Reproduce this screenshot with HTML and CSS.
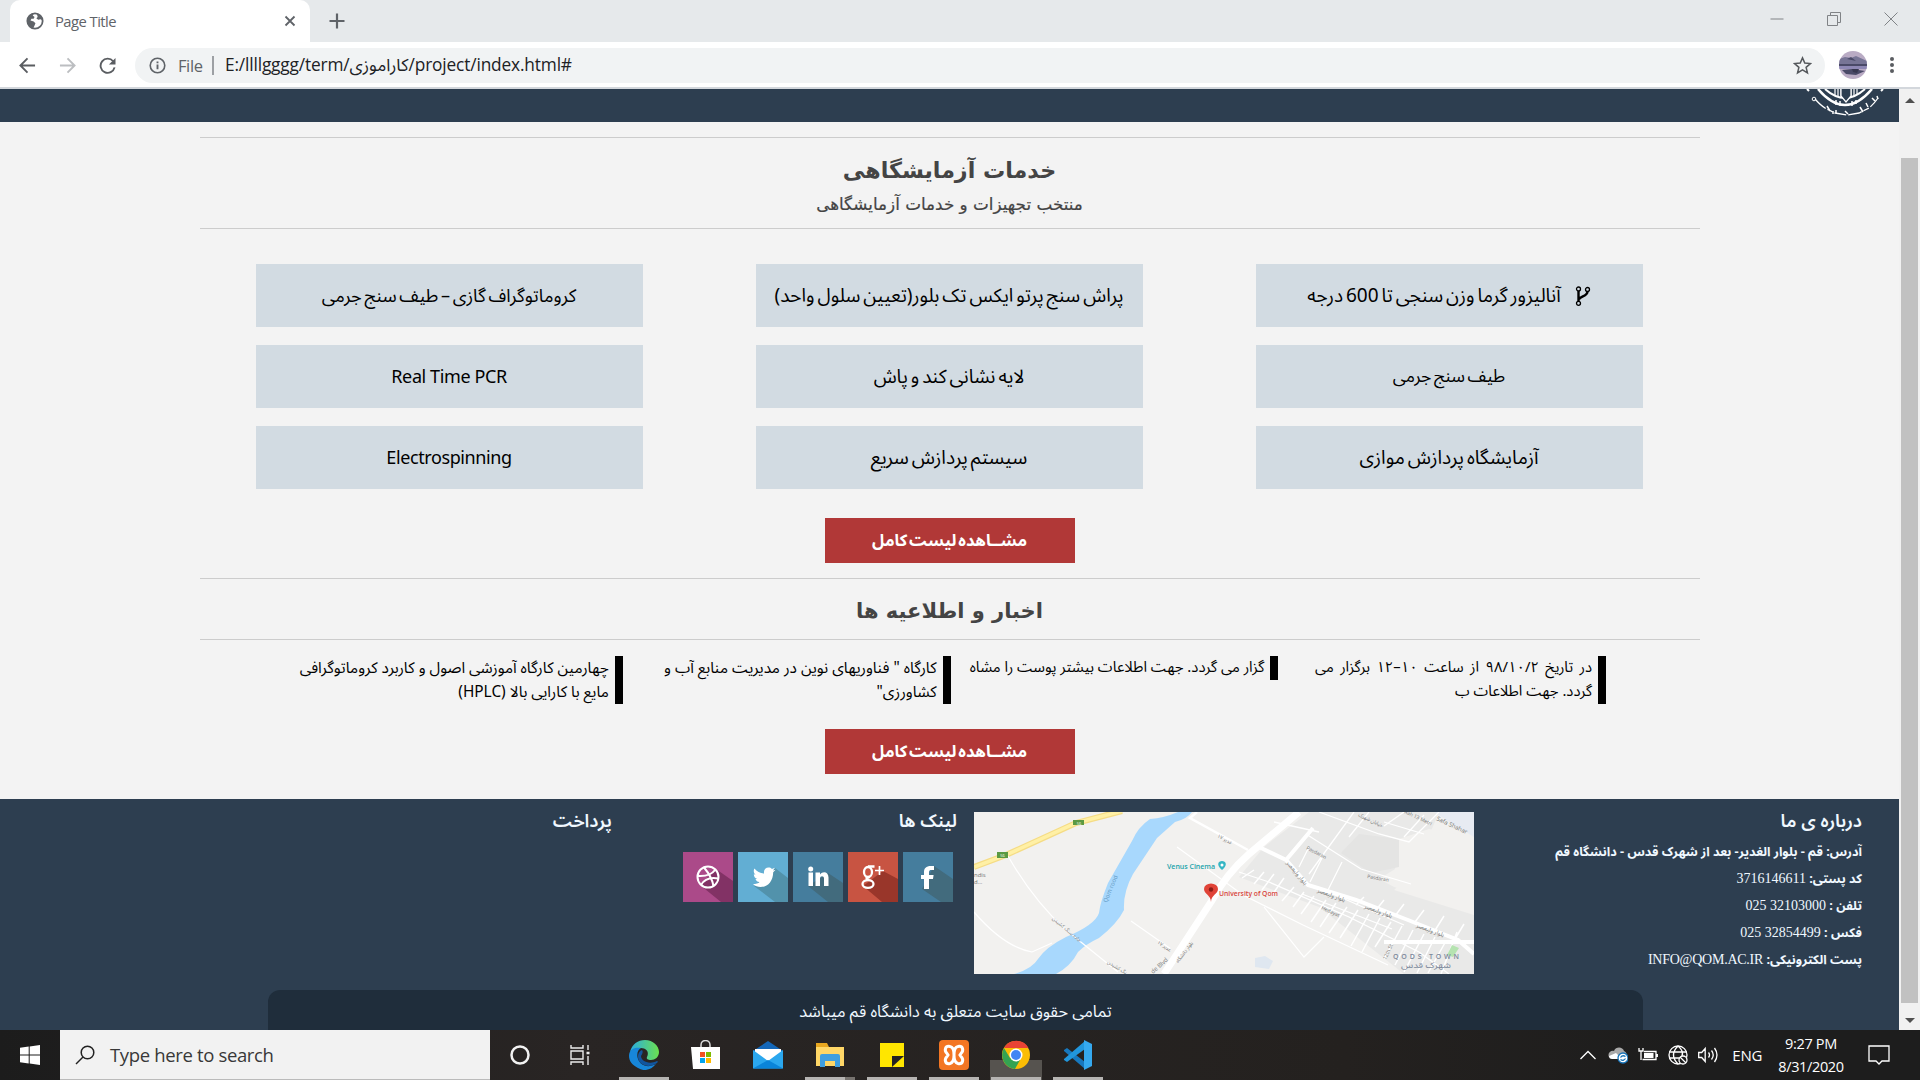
FILE: index.html
```html
<!DOCTYPE html>
<html lang="fa">
<head>
<meta charset="utf-8">
<title>Page Title</title>
<link rel="stylesheet" href="styles.css">
</head>
<body>
<div class="tabstrip">
  <div class="tab">
    <svg class="favicon" viewBox="0 0 20 20"><circle cx="10" cy="10" r="8.500" fill="none" stroke="#5f6368" stroke-width="2"/><path d="M9 1 7.500 4l2 1.500-1 2H6l-1 2 3.500 1 2 2-1 2.500L8 18C4 17 1.500 13.500 1.500 10c0-5 3.500-9 7.500-9zM12 2l1 3.500-1.500 1.500 2 1.500 2.500-.5 2.500 1c0-3-2.500-6.500-6.500-7z" fill="#5f6368"/></svg>
    <span class="tab-title">Page Title</span>
    <svg class="tab-close" viewBox="0 0 12 12"><path d="M1.500 1.500l9 9m0-9l-9 9" stroke="#5f6368" stroke-width="1.800"/></svg>
  </div>
  <svg class="new-tab" viewBox="0 0 16 16"><path d="M8 .5v15M.5 8h15" stroke="#5f6368" stroke-width="2.200"/></svg>
  <div class="window-buttons">
    <svg viewBox="0 0 14 14"><path d="M.5 7h13" stroke="#808386"/></svg>
    <svg viewBox="0 0 14 14"><path d="M.5 3.500h10v10H.5zM3.500 3V.5h10v10H11" fill="none" stroke="#808386"/></svg>
    <svg viewBox="0 0 14 14"><path d="M.5.5l13 13m0-13l-13 13" stroke="#808386"/></svg>
  </div>
</div>
<div class="toolbar">
  <svg class="nav" viewBox="0 0 18 18"><path d="M17 9H2M9 1.500 1.500 9 9 16.500" fill="none" stroke="#5a5d61" stroke-width="2"/></svg>
  <svg class="nav" viewBox="0 0 18 18"><path d="M1 9h15M9 1.500 16.500 9 9 16.500" fill="none" stroke="#bcbec1" stroke-width="2"/></svg>
  <svg class="nav" viewBox="0 0 18 18"><path d="M15 4.500A7.500 7.500 0 1 0 16.500 11" fill="none" stroke="#5a5d61" stroke-width="2"/><path d="M17.500 1v7h-7z" fill="#5a5d61"/></svg>
  <div class="omnibox">
    <svg class="info" viewBox="0 0 18 18"><circle cx="9" cy="9" r="7.700" fill="none" stroke="#5f6368" stroke-width="1.700"/><path d="M9 8v5M9 4.700v1.800" stroke="#5f6368" stroke-width="2"/></svg>
    <span class="scheme">File</span>
    <span class="url">E:/llllgggg/term/کاراموزی/project/index.html#</span>
    <svg class="star" viewBox="0 0 20 20"><path d="M10 2l2.400 5.500 5.900.5-4.500 3.900 1.400 5.800-5.200-3.100-5.200 3.100 1.400-5.800L1.700 8l5.900-.5z" fill="none" stroke="#55585c" stroke-width="1.600"/></svg>
  </div>
  <svg class="avatar" viewBox="0 0 28 28"><defs><clipPath id="face"><circle cx="14" cy="14" r="14"/></clipPath></defs><g clip-path="url(#face)"><path fill="#b9abc4" d="M0 0h28v28H0z"/><path fill="#777596" d="M0 8l6-2 6 1 5-2 11 5v5H0z"/><path fill="#4a4a68" d="M0 13h28v2H0zM8 8l4-2 5 4zM3 19l10-1 13 2-9 4-10-1z"/><path fill="#8e88b5" d="M0 15h28v3H0z"/><path fill="#373750" d="M13 18h7l-2 4-4-1z"/></g></svg>
  <svg class="menu" viewBox="0 0 6 18"><circle cx="3" cy="3" r="2"/><circle cx="3" cy="9" r="2"/><circle cx="3" cy="15" r="2"/></svg>
</div>

<div class="viewport">
<div class="page" dir="rtl">
  <header class="band">
    <svg class="emblem" viewBox="0 0 80 33" fill="none" stroke="#fff">
      <path d="M13 0q27 32 54 0" stroke-width="2.500"/>
      <path d="M20 0q20 18 40 0" stroke-width="2"/>
      <path d="M2 0l2 2M78 0l-2 2" stroke-width="2"/>
      <path d="M30 0v6M33 0v8M36 0v9M46 0v9M49 0v8M52 0v6" stroke-width="1.200"/>
      <path fill="#2d3e50" d="M36 0v7l5 6 5-6V0" stroke-width="1.200"/>
      <path d="M31 11v5M35 12v5M47 12v5M51 11v4" stroke-width="1.500"/>
      <path d="M10 10q8 9 14 11l6 3 12 2 12-2 10-5q5-4 9-10" stroke-width="1.300" stroke-dasharray="14 2 6 2 12 2"/>
      <path d="M22 17l3 5M28 22v3M31 21v3M40 22l3 3M55 18l3 5M61 14l2 4M67 9l3 3M72 7l1 3" stroke-width="1.500"/>
      <circle cx="9" cy="10" r="1.800"/>
    </svg>
  </header>
  <main class="content">
    <div class="section-head">
      <h2>خدمات آزمایشگاهی</h2>
      <p>منتخب تجهیزات و خدمات آزمایشگاهی</p>
    </div>
    <div class="services">
      <a class="card"><svg class="fork" viewBox="0 0 16 20" fill="none" stroke="#000"><circle cx="3.500" cy="3" r="2" stroke-width="1.300"/><circle cx="3.500" cy="17.300" r="2" stroke-width="1.300"/><circle cx="12.500" cy="3.500" r="2" stroke-width="1.300"/><path d="M3.500 5v10.500M12.500 5.500c0 5-7.500 4.500-8.500 8" stroke-width="2.400"/></svg>آنالیزور گرما وزن سنجی تا 600 درجه</a>
      <a class="card">پراش سنج پرتو ایکس تک بلور(تعیین سلول واحد)</a>
      <a class="card compact">کروماتوگراف گازی – طیف سنج جرمی</a>
      <a class="card tight">طیف سنج جرمی</a>
      <a class="card">لایه نشانی کند و پاش</a>
      <a class="card latin">Real Time PCR</a>
      <a class="card loose">آزمایشگاه پردازش موازی</a>
      <a class="card loose">سیستم پردازش سریع</a>
      <a class="card latin">Electrospinning</a>
    </div>
    <a class="button">مشــاهده لیست کامل</a>
    <div class="section-head news-head"><h2>اخبار و اطلاعیه ها</h2></div>
    <div class="news">
      <p class="dated"><span>در تاریخ ۹۸/۱۰/۲ از ساعت ۱۰–۱۲ برگزار می</span><br>گردد. جهت اطلاعات ب</p>
      <p class="short">گزار می گردد. جهت اطلاعات بیشتر پوست را مشاه</p>
      <p>کارگاه " فناوریهای نوین در مدیریت منابع آب و<br>کشاورزی"</p>
      <p>چهارمین کارگاه آموزشی اصول و کاربرد کروماتوگرافی<br>مایع با کارایی بالا (HPLC)</p>
    </div>
    <a class="button">مشــاهده لیست کامل</a>
  </main>
  <footer class="footer">
    <div class="footer-columns">
      <section class="about">
        <h3>درباره ی ما</h3>
        <ul>
          <li>آدرس: قم - بلوار الغدیر- بعد از شهرک قدس - دانشگاه قم</li>
          <li>کد پستی: <span>3716146611</span></li>
          <li>تلفن : <span dir="ltr">025 32103000</span></li>
          <li>فکس : <span dir="ltr">025 32854499</span></li>
          <li>پست الکترونیکی: <span>INFO@QOM.AC.IR</span></li>
        </ul>
      </section>
      <svg class="map" viewBox="0 0 500 162" direction="ltr">
        <path fill="#f2f1ef" d="M0 0h500v162H0z"/>
        <path fill="#e9e9e8" d="M335 0h130l-25 60-20 18 80 25v59h-70L345 95 265 65l25-30z"/>
        <path fill="#f2f1ef" d="M500 25v75l-80-25-15-8 16-10 4-30 30-10z"/>
        <path fill="#e4e4e3" d="M385 22l40 5v28l-28 6-30-20z"/>
        <path fill="#e7ebf2" d="M460 0h40v25z"/>
        <path fill="#a8d8fd" d="M218 0h-14q-14 6-28 7-12 8-18 22L134 71q-8 20-9 30-4 12-33 24-20 10-28 22-6 10-24 15h42q15-8 22-22 8-8 21-14 18-14 25-28-1-18 9-36l24-36 18-16q12-3 17-10z"/>
        <path d="M0 55 32 43 102 11 148-1" fill="none" stroke="#f5dc85" stroke-width="6"/>
        <path d="M0 55 32 43 102 11 148-1" fill="none" stroke="#fff0a5" stroke-width="3.500"/>
        <g fill="none" stroke="#fff">
          <path d="M34 44q25 44 58 74l52 42M0 100q30 35 58 40l20-9M157 109l40 28M203 35l66 48 60 30 85 40M290 95l40 50 20-20" stroke-width="1.200"/>
          <path d="M223 0l-7 6 58 32" stroke-width="2.500"/>
          <path d="M325 0 275 42Q252 62 237 90L190 162" stroke-width="7"/>
          <path d="M285 35l27 13 22 25 48 15 52 20 50 20 16 14M312 48l27-32M410 130h90" stroke-width="4"/>
          <path d="M265 60l30 10 80 35 70 35 30 22M328 82l90 35M350 78l80 35M332 22l55 35 50 15M300 10l45 10M380 0l-45 62M395 0l-20 25M345 0l60 22 30 8 30-30M410 10l40 12M430 0l-20 14M450 3l-20 22M335 35l-10 20M350 42l-14 28M368 50l-14 28" stroke-width="1.300"/>
          <path d="M280 58l-12 8M290 60l-10 12M300 62l-12 16M310 66l-12 17M320 75l-12 14M330 80l-11 15M340 84l-13 18M352 88l-15 22M362 91l-16 24M373 95l-18 26M384 98l-18 28M395 102l-18 32M406 106l-18 34M417 110l-16 25M428 114l-18 33M439 118l-18 35M450 122l-20 38M461 125l-18 36M472 129l-18 32M483 120l-16 42M390 85l-8 8M410 88l-8 10M430 92l-9 12M450 98l-9 12M470 104l-10 16M490 112l-12 20" stroke-width="1.500"/>
        </g>
        <path fill="#b5e3b0" d="M478 133l7 3-6 9-6-2z"/><path fill="#dfe7f0" d="M281 146l10-2 8 5-4 8-14-2z"/>
        <path fill="#5b9a42" d="M99 8h11v5H99zM23 40h11v6H23z"/>
        <g class="map-text">
          <text x="105" y="12.500" font-size="4" fill="#fff" text-anchor="middle">56</text>
          <text x="28.500" y="45" font-size="4" fill="#fff" text-anchor="middle">56</text>
          <text x="0" y="65" font-size="6">ndis</text><text x="0" y="72" font-size="6">d...</text>
          <text x="193" y="57" fill="#22a3ab" font-size="7" font-weight="600" textLength="48">Venus Cinema</text>
          <text x="245" y="84" fill="#d8453c" font-size="7" font-weight="600" textLength="59" lengthAdjust="spacingAndGlyphs">University of Qom</text>
          <text transform="translate(133 91) rotate(-68)" fill="#5e96c0" font-size="6">Qom rood</text>
          <text transform="translate(179 162) rotate(-42)" font-size="6">de Blvd</text>
          <text transform="translate(462 8) rotate(25)" font-size="6">Safa Shahar</text>
          <text transform="translate(430 1) rotate(25)" font-size="5">Rah 13 Metri</text>
          <text transform="translate(332 37) rotate(28)" font-size="5">Pasdaran</text>
          <text transform="translate(393 66) rotate(10)" font-size="5">Pasdaran</text>
          <text transform="translate(347 97) rotate(25)" font-size="5">Hedayat</text>
          <text transform="translate(412 148) rotate(-65)" font-size="5">12th St</text>
          <text transform="translate(243 25) rotate(28)" font-size="5">۱۷ غدیر</text>
          <text transform="translate(384 4) rotate(25)" font-size="5">خیابان شهرک</text>
          <text transform="translate(312 51) rotate(50)" font-size="6">بلوار ولیعصر</text>
          <text transform="translate(343 80) rotate(20)" font-size="6">بلوار ولیعصر</text>
          <text transform="translate(390 96) rotate(20)" font-size="6">بلوار ولیعصر</text>
          <text transform="translate(442 115) rotate(20)" font-size="6">بلوار ولیعصر</text>
          <text transform="translate(78 107) rotate(40)" font-size="5">جاده سنگ کشیدن</text>
          <text transform="translate(133 151) rotate(32)" font-size="5">سنگ کشیدن</text>
          <text transform="translate(183 131) rotate(35)" font-size="5">غدیر ۱۷</text>
          <text transform="translate(204 151) rotate(-52)" font-size="5">بلوار دانشگاه</text>
          <text x="419" y="147" font-size="7" font-weight="600" fill="#7b889b" textLength="66">QODS TOWN</text>
          <text x="427" y="156" font-size="8" fill="#7b889b" textLength="50" lengthAdjust="spacingAndGlyphs">شهرک قدس</text>
        </g>
        <path fill="#35b6c4" d="M248 58c-6-5-4-9 0-9s6 4 0 9z"/><circle cx="248" cy="53" r="1.500" fill="#fff"/>
        <path fill="#e04337" d="M237 90c0-7-7-8-7-13a7 5.500 0 0 1 14 0c0 5-7 6-7 13z"/><circle cx="237" cy="77.500" r="2.200" fill="#8c1c16"/>
      </svg>
      <section class="links">
        <h3>لینک ها</h3>
        <div class="social">
          <svg viewBox="0 0 50 50"><path fill="#457d9d" d="M0 0h50v50H0z"/><path fill="#426b7d" d="M31 14l19 13v23H38L19 37z"/><path fill="#fff" d="M31 14h-3c-5 0-7 2.500-7 6v3h-3v4h3v10h5V27h4l.6-4H26v-2.500c0-2 .8-2.500 2.500-2.500H31z"/></svg>
          <svg viewBox="0 0 50 50"><path fill="#c85442" d="M0 0h50v50H0z"/><path fill="#99362a" d="M35 19l15 8v23H34L15 34z"/><g fill="none" stroke="#fff" stroke-width="2.300"><ellipse cx="20" cy="20" rx="4" ry="5"/><ellipse cx="20" cy="32" rx="5.500" ry="3.800"/><path d="M20 14.500h6.500M22 25c-5 0-4 2-1 3"/><path d="M31.500 14v9M27 18.500h9" stroke-width="1.700"/></g></svg>
          <svg viewBox="0 0 50 50"><path fill="#457d9d" d="M0 0h50v50H0z"/><path fill="#426b7d" d="M35 21l15 10v19H35L15 34z"/><path fill="#fff" d="M15.500 20.500h4.500V34h-4.500zM22.500 20.500H27v2c3-4 8.500-2.500 8.500 3V34H31v-7.500c0-3-4-3-4 0V34h-4.500z"/><circle cx="17.700" cy="17" r="2.500" fill="#fff"/></svg>
          <svg viewBox="0 0 50 50"><path fill="#62aed3" d="M0 0h50v50H0z"/><path fill="#5292ab" d="M37 16l13 10v24H37L16 34z"/><path fill="#fff" d="M15 32c3 0 5-.5 6.500-2-2.500 0-3.500-1.500-4-3h1.800c-2.300-.7-3.500-2.500-3.500-4.700l1.800.5c-2-1.600-2.300-4-1.200-6.300 2.500 3 5.500 4.700 9.700 5-.8-3.500 1.500-6 4.500-6 1.400 0 2.400.5 3.300 1.400l3.100-1.100-2 2.600 2.600-.6-2.400 2.400C35 29 30 35 22.500 35c-2.700 0-5.300-.8-7.500-3z"/></svg>
          <svg viewBox="0 0 50 50"><path fill="#ab4a89" d="M0 0h50v50H0z"/><path fill="#823265" d="M33 17l17 12v21H38L17 33z"/><g fill="none" stroke="#fff" stroke-width="2"><circle cx="25" cy="25" r="10.500"/><path d="M21 15.500Q29 25 30.500 34M14.500 24Q27 25 32.500 17.500M18 33Q23 24 35.500 26.500"/></g></svg>
        </div>
      </section>
      <section><h3>پرداخت</h3></section>
    </div>
    <div class="copyright">تمامی حقوق سایت متعلق به دانشگاه قم میباشد</div>
  </footer>
</div>
<div class="scrollbar">
  <i class="arrow up"></i><i class="thumb"></i><i class="arrow down"></i>
</div>
</div>

<div class="taskbar">
  <div class="start"><svg viewBox="0 0 20 20"><path fill="#fff" d="M0 2.800 8.700 1.600v8H0zM9.700 1.400 20 0v9.600H9.700zM0 10.500h8.700v8L0 17.300zM9.700 10.500H20V20L9.700 18.600z"/></svg></div>
  <div class="search"><svg viewBox="0 0 20 20"><circle cx="12.500" cy="7.500" r="6.300"/><path d="M8 12l-7 7"/></svg><span>Type here to search</span></div>
  <div class="apps">
    <div class="app"><svg viewBox="0 0 30 30"><circle cx="15" cy="15" r="8.500" fill="none" stroke="#f2f2f2" stroke-width="2.500"/></svg></div>
    <div class="app"><svg viewBox="0 0 30 30" fill="none" stroke="#ececec" stroke-width="1.400"><path d="M4 5v3h12V5M4 11h12v8H4zM4 25v-3h12v3M21 5v5M21 16v9"/><path d="M19.500 13h3" stroke-width="2.500"/></svg></div>
    <div class="app open"><svg viewBox="0 0 30 30"><defs><linearGradient id="eg"><stop stop-color="#29abe2"/><stop offset="1" stop-color="#6be04f"/></linearGradient></defs><path fill="url(#eg)" d="M1 12C3 4 9 0 16 0c8 0 14 6 14 12 0 5-4 8-8 8-3 0-5-1-4-3 3-6-2-9-6-9-5 0-9 2-11 4z"/><path fill="#1786d9" d="M0 16C0 9 6 7 12 8c-4 2-5 8-2 13 3 5 9 7 17 3-5 6-12 8-18 4-6-3-9-7-9-12z"/><path fill="#11559f" d="M10 21c-2-5-1-9 3-11 1 1 1 3-1 6 0 5 8 9 16 5 1 0 1 1 0 2-7 5-15 3-18-2z"/></svg></div>
    <div class="app"><svg viewBox="0 0 30 30"><path d="M10 8V5c0-6 9-6 9 0v3" fill="none" stroke="#ddd" stroke-width="1.500"/><path fill="#fff" d="M0 7h29v22H2z"/><path fill="#f25022" d="M9 12h5v5H9z"/><path fill="#7fba00" d="M15 12h5v5h-5z"/><path fill="#00a4ef" d="M9 18h5v5H9z"/><path fill="#ffb900" d="M15 18h5v5h-5z"/></svg></div>
    <div class="app"><svg viewBox="0 0 30 30"><path fill="#1467b8" d="M0 11 15 1l15 10v4H0z"/><path fill="#fff" d="M2 9h26v9L15 21 2 18z"/><path fill="#2ba7ee" d="M0 10l15 11 15-11v18.500H0z"/><path fill="#0a84d9" d="M0 28.500 15 20l15 8.500z"/></svg></div>
    <div class="app open stacked"><svg viewBox="0 0 30 30"><path fill="#e8a720" d="M1 3h11l2 4H1z"/><path fill="#ffd767" d="M1 7h28v19H1z"/><path fill="#3f9fe0" d="M5 16q0-2 2-2h16q2 0 2 2v11h-5v-6H10v6H5z"/></svg></div>
    <div class="app open"><svg viewBox="0 0 30 30"><path fill="#ffe600" d="M3 3h24v24H3z"/><path fill="#222" d="M15 27V16h12z"/></svg></div>
    <div class="app open"><svg viewBox="0 0 30 30"><rect width="30" height="30" rx="4" fill="#f37623"/><path d="M11 6.500c-5-1-6 4-3 7l1 1.500-1 1.500c-3 3-2 8 3 7q4-1 4-8.500 0-8 4-8.500c5-1 6 4 3 7l-1 1.500 1 1.500c3 3 2 8-3 7q-4-1-4-8.500 0-8-4-8.500z" fill="none" stroke="#fff" stroke-width="3"/></svg></div>
    <div class="app open active"><svg viewBox="0 0 30 30"><circle cx="15" cy="15" r="14" fill="#fbbd05"/><path fill="#e94335" d="M3 8a14 14 0 0 1 24.500 0H15z"/><path fill="#34a352" d="M3 8a14 14 0 0 0 11 21l5-9-10-2z"/><circle cx="15" cy="15" r="6.500" fill="#fff"/><circle cx="15" cy="15" r="5" fill="#4285f4"/></svg></div>
    <div class="app open"><svg viewBox="0 0 30 30"><path fill="#1778be" d="M1 10l3-2 18 14v7L1 11z"/><path fill="#2196dc" d="M1 19 22 1v8L4 22l-3-2z"/><path fill="#35a9ef" d="M21 0l8 4v22l-8 4z"/></svg></div>
  </div>
  <div class="tray">
    <svg class="chevron" viewBox="0 0 16 10"><path d="M.5 9 8 1.500 15.500 9"/></svg>
    <svg class="cloud" viewBox="0 0 20 18"><path fill="#a9a9a9" stroke="none" d="M1 11c-2-4 2-7 5-6 2-5 9-4 10 0 3 1 4 6 1 8z"/><path fill="#fff" stroke="none" d="M1 10l7-3 6 6H4q-3 0-3-3z"/><circle cx="15" cy="12" r="5" fill="#fff" stroke="#1673b8"/><path stroke="#1673b8" d="M12.500 11.500q2-3 5-1M17.500 12.500q-2 3-5 1"/></svg>
    <svg viewBox="0 0 20 18"><path d="M6 5.500h12v8H4.500M19.300 8v3M1 2v3h4V2M3 5v9"/><path fill="#fff" stroke="none" d="M6 7h9.500v5H6z"/></svg>
    <svg class="globe" viewBox="0 0 20 20"><circle cx="10" cy="10" r="9"/><path d="M1 7h18M1 13h11M10 1q-9 9 0 18M10 1q6 5 4 10"/><circle cx="15" cy="15" r="4" fill="#1d1d1d"/><path d="M12 12l6 6"/></svg>
    <svg viewBox="0 0 20 18"><path d="M.7 6.500h3l3.500-4v13l-3.500-4h-3zM10.500 6.500q2 2.500 0 5M13.500 4.500q3.500 4.500 0 9M16.500 2q5 7 0 14"/></svg>
    <span class="lang">ENG</span>
    <div class="clock"><span>9:27 PM</span><span>8/31/2020</span></div>
    <svg class="notice" viewBox="0 0 22 20"><path d="M1 1h20v15h-7l-3 3-3-3H1z"/></svg>
  </div>
</div>
</body>
</html>
```
FILE: styles.css
```css
* { box-sizing: border-box; }
body, h2, h3, p, ul { margin: 0; padding: 0; }
body {
  width: 1920px;
  height: 1080px;
  overflow: hidden;
  display: flex;
  flex-direction: column;
  background: #fff;
  font-family: "Open Sans", "Noto Sans Arabic", "DejaVu Sans Condensed", sans-serif;
}
svg { display: block; flex: none; }

/* browser frame */
.tabstrip { height: 42px; background: #e6e9eb; display: flex; align-items: center; padding-left: 10px; }
.tab {
  width: 300px; height: 42px; padding: 0 14px 0 16px;
  display: flex; align-items: center; gap: 11px;
  background: #fff; border-radius: 10px 10px 0 0;
}
.favicon { width: 18px; height: 18px; }
.tab-title { flex: 1; font-size: 14.800px; letter-spacing: -0.550px; color: #5f6368; padding-bottom: 1px; }
.tab-close { width: 12px; height: 12px; }
.new-tab { width: 16px; height: 16px; margin-left: 19px; }
.window-buttons { margin-left: auto; display: flex; gap: 43px; padding: 0 22px 5px 0; }
.window-buttons svg { width: 14px; height: 14px; }
.toolbar {
  height: 47px; padding: 1px 25px 0 19px; border-bottom: 2px solid #d3d7dc;
  display: flex; align-items: center;
}
.nav { width: 17px; height: 17px; margin-right: 23px; }
.omnibox {
  width: 1690px; height: 35px; margin-left: -4px; padding: 0 13px 0 14px;
  display: flex; align-items: center;
  background: #f1f3f4; border-radius: 18px;
}
.info { width: 17px; height: 17px; margin-right: 12px; }
.scheme {
  width: 36px; margin-right: 11px; border-right: 2px solid #9da0a4;
  color: #5f6368; font-size: 16.500px; line-height: 19px; letter-spacing: -0.400px;
}
.url { flex: 1; font-size: 17.300px; letter-spacing: -0.150px; color: #202124; white-space: nowrap; }
.star { width: 19px; height: 19px; }
.avatar { width: 28px; height: 28px; margin-left: 14px; }
.menu { width: 6px; height: 18px; margin-left: auto; fill: #5a5d61; }

/* page area */
.viewport { height: 941px; display: flex; }
.page {
  width: 1899px; height: 941px; background: #f3f3f3;
  display: flex; flex-direction: column; overflow: hidden;
  font-family: "Noto Sans Arabic", "Noto Sans", "DejaVu Sans Condensed", sans-serif;
}
.band { height: 33px; flex: none; background: #2d3e50; padding-right: 14px; }
.emblem { width: 80px; height: 33px; }
.content {
  width: 1500px; height: 677px; margin: 0 auto; padding-top: 15px;
  display: flex; flex-direction: column; align-items: center;
}
.section-head {
  width: 1500px; height: 92px; padding-top: 15px; flex: none;
  border: solid #ccc; border-width: 1px 0; text-align: center; color: #444;
  font-family: "DejaVu Sans", sans-serif;
}
.section-head h2 { font-size: 22.200px; line-height: 34px; }
.section-head p { font-size: 16.800px; line-height: 34px; -webkit-text-stroke: 0.200px #444; }
.services {
  width: 1500px; margin-top: 35px; padding: 0 57px 0 56px;
  display: grid; grid-template-columns: repeat(3, 387px); grid-auto-rows: 62.500px;
  justify-content: space-between; row-gap: 18.500px;
}
.card {
  display: flex; align-items: center; justify-content: center; padding-top: 1px;
  background: #d2dbe2; color: #000; font-size: 19px; word-spacing: -2px; white-space: nowrap;
}
.card.compact { font-size: 18.100px; }
.card.tight { font-size: 17.500px; }
.card.loose { font-size: 19.200px; }
.card.latin { font-size: 18px; letter-spacing: -0.400px; word-spacing: 0; }
.fork { width: 16px; height: 20px; margin-left: 14px; }
.button {
  width: 250px; height: 45px; margin-top: 29px; padding-top: 1px; flex: none;
  display: flex; align-items: center; justify-content: center;
  background: #b13837; color: #fff; font-size: 16.500px; font-weight: 700; word-spacing: -2.500px; white-space: nowrap;
}
.news-head { height: 62px; margin-top: 15px; padding-top: 13px; }
.news-head h2 { font-size: 21px; line-height: 38px; }
.news {
  width: 1311px; margin: 16px 0 -4px; height: 48px; flex: none;
  position: relative; left: 1px;
  display: grid; grid-template-columns: repeat(4, 327.700px); align-items: start;
}
.news p {
  border-right: 8px solid #000; padding-right: 6px;
  font-size: 15.400px; line-height: 24px; white-space: nowrap;
}
.news .dated { font-size: 14.800px; }
.dated span { word-spacing: 2.600px; }
.news .short { font-size: 14.900px; }

/* footer */
.footer { height: 231px; flex: none; background: #2d3e50; color: #f0f8ff; display: flex; flex-direction: column; }
.footer-columns { height: 191px; padding: 13px 37px 0 0; display: flex; }
.footer h3 { font-size: 18.300px; line-height: 18px; font-weight: 600; }
.about { width: 388px; }
.about ul { list-style: none; margin-top: 9px; font-size: 12.700px; font-weight: 700; line-height: 27px; white-space: nowrap; }
.about span { font: 14px "Liberation Serif", serif; letter-spacing: -0.250px; }
.map { width: 500px; height: 162px; }
.map-text { font-family: "Open Sans", "Noto Sans Arabic", sans-serif; fill: #777; }
.links { width: 345px; margin-right: 17px; }
.social { display: flex; gap: 5px; margin: 22px 4px 0 0; }
.social svg { width: 50px; height: 50px; }
.copyright {
  width: 1375px; height: 40px; margin-right: 256px; padding-top: 6px;
  background: #1f2d3b; border-radius: 12px 12px 0 0;
  text-align: center; font-size: 16.250px; line-height: 32px;
}

.scrollbar { width: 21px; background: #f1f1f1; display: flex; flex-direction: column; align-items: center; }
.arrow { border: 5px solid transparent; width: 0; height: 0; }
.up { border-bottom-color: #505050; margin-top: 4px; }
.down { border-top-color: #505050; margin-top: 15px; }
.thumb { width: 17px; height: 845px; margin-top: 55px; background: #c1c1c1; }

/* taskbar */
.taskbar { height: 50px; background: linear-gradient(90deg, #1c1c1c, #292524 30%, #24211f 70%, #1d1d1d 88%); color: #fff; display: flex; align-items: stretch; }
.start { width: 60px; display: flex; align-items: center; justify-content: center; }
.start svg { width: 20px; height: 20px; }
.search {
  width: 430px; padding-left: 15px; display: flex; align-items: center; gap: 15px;
  background: #f2f2f2; color: #383838; border-bottom: 1px solid #bbb;
  font-size: 18.500px; letter-spacing: -0.350px;
}
.search svg { width: 20px; height: 20px; fill: none; stroke: #222; stroke-width: 1.500; }
.apps { display: flex; margin-left: -1px; }
.app { width: 62px; display: flex; align-items: center; justify-content: center; position: relative; }
.app svg { width: 30px; height: 30px; position: relative; }
.open::after { content: ""; position: absolute; left: 6px; bottom: 0; width: 50px; height: 3px; background: #b6b4b2; }
.stacked::after { background: linear-gradient(90deg, #b6b4b2 40px, #77736f 40px); }
.active::before { content: ""; position: absolute; left: 5px; bottom: 0; width: 52px; height: 20px; background: #56534f; }
.tray { margin-left: auto; padding-right: 30px; display: flex; align-items: center; gap: 10px; }
.tray svg { width: 20px; height: 20px; fill: none; stroke: #fff; stroke-width: 1.300; }
.tray .chevron { width: 16px; margin-right: 2px; }
.lang { font-size: 15px; letter-spacing: -0.300px; margin: 0 4px 0 4px; }
.clock { width: 70px; display: flex; flex-direction: column; text-align: center; font-size: 14.500px; line-height: 23px; letter-spacing: -0.350px; }
.tray .notice { width: 22px; margin-left: 12px; }
```
